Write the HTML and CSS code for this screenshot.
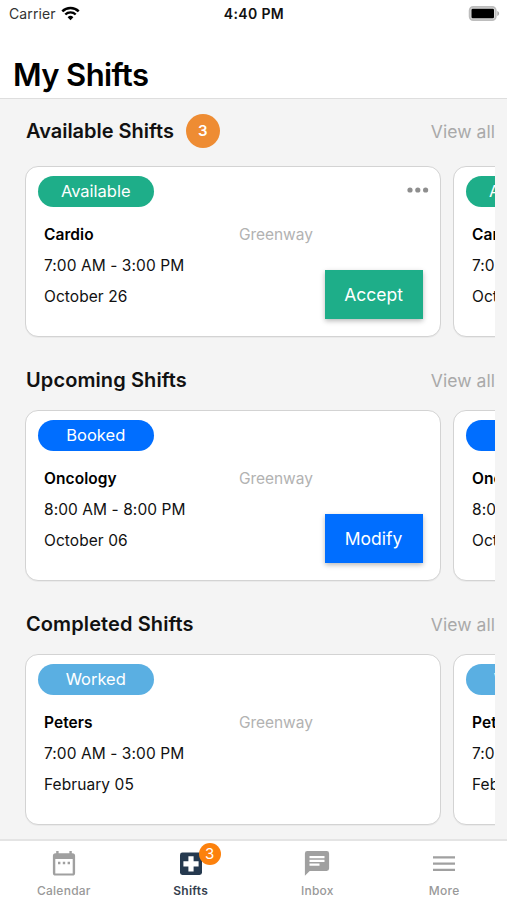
FILE: index.html
```html
<!DOCTYPE html>
<html lang="en">
<head>
<meta charset="utf-8">
<meta name="viewport" content="width=device-width, initial-scale=1">
<title>My Shifts</title>
<link rel="stylesheet" href="styles.css">
</head>
<body>
<div class="app">
  <header class="header">
    <div class="status">
      <div class="carrier"><span>Carrier</span>
        <svg class="wifi" width="19" height="15" viewBox="0 0 19 15"><path d="M1.3 5.3a11.6 11.6 0 0 1 16.4 0" fill="none" stroke="#000" stroke-width="2.5"/><path d="M4.3 8.5a7.4 7.4 0 0 1 10.4 0" fill="none" stroke="#000" stroke-width="2.4"/><path d="M9.5 14.2 6.6 11.2a4.2 4.2 0 0 1 5.8 0z"/></svg>
      </div>
      <div class="time">4:40 PM</div>
      <svg class="battery" width="32" height="15" viewBox="0 0 32 15"><rect x="1.6" y=".9" width="26.2" height="13.2" rx="3.6" fill="#ddd" stroke="#bdbdbd" stroke-width="1.7"/><rect x="3.5" y="2.8" width="22.5" height="9.4" rx="1.2"/><path d="M29.3 5c2.4.8 2.4 4.2 0 5z" fill="#aaa"/></svg>
    </div>
    <h1>My Shifts</h1>
  </header>

  <main class="content">
    <section class="section first">
      <div class="heading"><h2>Available Shifts</h2><span class="count">3</span><a class="all">View all</a></div>
      <div class="track">
        <article class="card green">
          <div class="top"><span class="pill">Available</span><svg class="dots" width="22" height="6" viewBox="0 0 22 6" fill="#8e8e8e"><circle cx="3" cy="3" r="2.6"/><circle cx="10.8" cy="3" r="2.6"/><circle cx="18.6" cy="3" r="2.6"/></svg></div>
          <div class="row"><strong>Cardio</strong><span class="place">Greenway</span></div>
          <div class="row">7:00 AM - 3:00 PM</div>
          <div class="row">October 26</div>
          <button class="action">Accept</button>
        </article>
        <article class="card green">
          <div class="top"><span class="pill">Available</span></div>
          <div class="row"><strong>Cardio</strong></div>
          <div class="row">7:00 AM - 3:00 PM</div>
          <div class="row">October 26</div>
        </article>
      </div>
    </section>

    <section class="section">
      <div class="heading"><h2>Upcoming Shifts</h2><a class="all">View all</a></div>
      <div class="track">
        <article class="card blue">
          <div class="top"><span class="pill">Booked</span></div>
          <div class="row"><strong>Oncology</strong><span class="place">Greenway</span></div>
          <div class="row">8:00 AM - 8:00 PM</div>
          <div class="row">October 06</div>
          <button class="action">Modify</button>
        </article>
        <article class="card blue">
          <div class="top"><span class="pill">Booked</span></div>
          <div class="row"><strong>Oncology</strong></div>
          <div class="row">8:00 AM - 8:00 PM</div>
          <div class="row">October 06</div>
        </article>
      </div>
    </section>

    <section class="section">
      <div class="heading"><h2>Completed Shifts</h2><a class="all">View all</a></div>
      <div class="track">
        <article class="card sky">
          <div class="top"><span class="pill">Worked</span></div>
          <div class="row"><strong>Peters</strong><span class="place">Greenway</span></div>
          <div class="row">7:00 AM - 3:00 PM</div>
          <div class="row">February 05</div>
        </article>
        <article class="card sky">
          <div class="top"><span class="pill">Worked</span></div>
          <div class="row"><strong>Peters</strong></div>
          <div class="row">7:00 AM - 3:00 PM</div>
          <div class="row">February 05</div>
        </article>
      </div>
    </section>
  </main>

  <nav class="tabs">
    <a class="tab"><svg width="28" height="28" viewBox="0 0 28 28"><path fill="#a0a0a0" fill-rule="evenodd" d="M6.2 1h2.4v2.2h10.8V1h2.4v2.2h.7a2.6 2.6 0 0 1 2.6 2.6v17.2a2.6 2.6 0 0 1-2.6 2.6h-17a2.6 2.6 0 0 1-2.6-2.6V5.800a2.6 2.6 0 0 1 2.6-2.6h.7zM5.300 9v14.400h17.400V9z"/><path fill="#a0a0a0" d="M8 11.800h2.400v2.400H8zM12.800 11.800h2.400v2.400h-2.400zM17.600 11.800H20v2.400h-2.400z"/></svg><span>Calendar</span></a>
    <a class="tab active"><svg width="28" height="28" viewBox="0 0 28 28"><rect x="3" y="2.500" width="22" height="22.500" rx="2.400" fill="#25394f"/><path fill="#fff" d="M11.400 6.200h5.200v5h5v5.200h-5v5.200h-5.200v-5.200h-5v-5.200h5z"/></svg><b class="badge">3</b><span>Shifts</span></a>
    <a class="tab"><svg width="28" height="28" viewBox="0 0 28 28"><path fill="#a0a0a0" fill-rule="evenodd" d="M4.300 1h19.400a2.400 2.400 0 0 1 2.400 2.400v15.200a2.400 2.400 0 0 1-2.400 2.400H6.700l-4.800 4.800V3.400A2.400 2.400 0 0 1 4.300 1zM6.500 6v2.200h15V6zM6.500 9.800V12h15V9.800zM6.500 13.600v2.200h10v-2.200z"/></svg><span>Inbox</span></a>
    <a class="tab"><svg width="28" height="28" viewBox="0 0 28 28"><path d="M3 7.400h22M3 13.600h22M3 19.800h22" stroke="#a0a0a0" stroke-width="2.200"/></svg><span>More</span></a>
  </nav>
</div>
</body>
</html>
```
FILE: styles.css
```css
* { box-sizing: border-box; }
body { margin: 0; font-family: Inter, "Liberation Sans", sans-serif; color: #111; background: #f4f4f4; }
.app { width: 507px; height: 900px; display: flex; flex-direction: column; overflow: hidden; }
.header { height: 99px; flex: none; background: #fff; border-bottom: 1px solid #dedede; }
.status { height: 27px; display: grid; grid-template-columns: 1fr auto 1fr; align-items: center; padding: 0 7px 0 9px; }
.carrier { display: flex; align-items: center; gap: 5px; font-size: 14px; letter-spacing: .1px; color: #333; }
.wifi { display: block; }
.time { margin-left: -1px; font-size: 14px; font-weight: 600; letter-spacing: .35px; }
.battery { justify-self: end; display: block; }
h1 { margin: 26px 0 0 13px; font-size: 31px; line-height: 44px; font-weight: 600; letter-spacing: -.6px; color: #000; }
.content { flex: 1; min-height: 0; overflow: hidden; padding: 0 12px 0 25px; }
.heading { display: flex; align-items: center; height: 59px; padding-left: 1px; padding-bottom: 1px; }
.first .heading { height: 67px; padding-bottom: 3px; }
h2 { margin: 0; font-size: 20px; line-height: 28px; font-weight: 600; letter-spacing: .1px; }
.first h2 { letter-spacing: -.02px; }
.count { width: 34px; height: 34px; margin-left: 12px; border-radius: 50%; background: #ee8c33; color: #fff; font-size: 15px; font-weight: 600; line-height: 34px; text-align: center; }
.all { margin-left: auto; color: #a9a9a9; font-size: 17.5px; letter-spacing: .05px; }
.track { display: flex; gap: 12px; overflow: hidden; height: 172px; }
.section + .section { margin-top: 13px; }
.section + .section .heading { height: 59px; }
.card { position: relative; flex: none; width: 416px; height: 171px; padding: 8.500px 12px 8px 11.500px; background: #fff; border: 1px solid #d3d3d3; border-radius: 13px; box-shadow: 0 1px 0 rgba(0,0,0,.04); }
.top { display: flex; justify-content: space-between; height: 43px; }
.pill { width: 116.500px; height: 31px; border-radius: 16px; color: #fff; font-size: 16.500px; line-height: 30px; text-align: center; }
.dots { margin: 11px -.5px 0 0; }
.row { display: flex; height: 31.400px; padding-left: 6.500px; align-items: center; font-size: 15.500px; letter-spacing: .07px; }
.row strong { width: 195px; font-weight: 600; color: #000; }
.place { color: #b2b2b2; letter-spacing: -.05px; }
.action { position: absolute; right: 17.500px; bottom: 17px; width: 98px; height: 49.500px; border: 0; padding: 1px 0 0; color: #fff; font: 17.500px Inter, "Liberation Sans", sans-serif; box-shadow: 0 2px 5px rgba(0,0,0,.28); }
.green .pill, .green .action { background: #1eae89; }
.blue .pill, .blue .action { background: #006eff; }
.sky .pill { background: #5aafe2; }
.tabs { flex: none; height: 61px; display: grid; grid-template-columns: repeat(4, 1fr); background: #fff; border-top: 2px solid #e4e4e4; }
.tab { position: relative; display: flex; flex-direction: column; align-items: center; padding: 9px 0 0 1px; font-size: 12px; line-height: 18px; font-weight: 500; color: #999; letter-spacing: .25px; }
.tab svg { display: block; margin-bottom: 4px; }
.tab.active { color: #34404e; font-weight: 600; }
.badge { position: absolute; top: 2px; left: 72px; width: 22px; height: 22px; border-radius: 50%; background: #fc810d; color: #fff; font-size: 15px; font-weight: 400; line-height: 22px; text-align: center; letter-spacing: 0; }
```
